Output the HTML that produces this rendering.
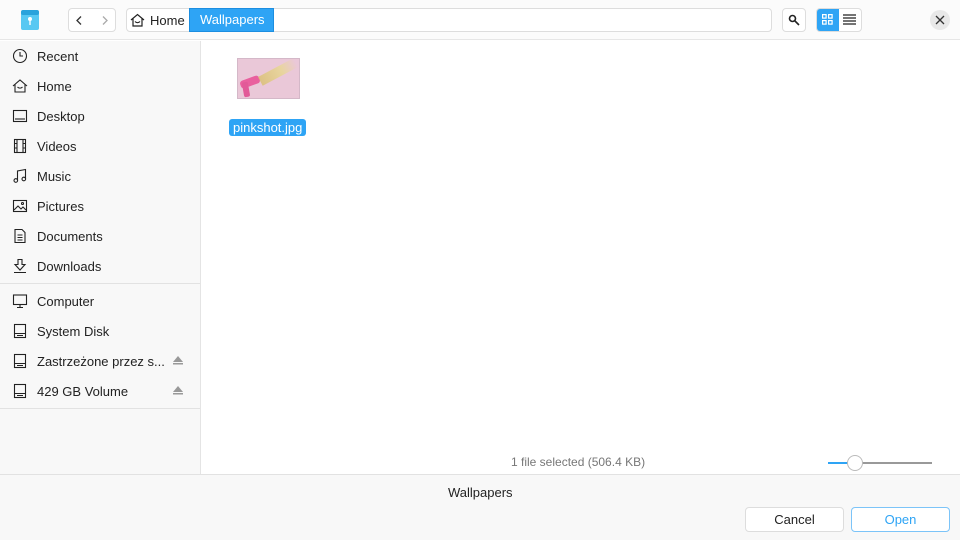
<!DOCTYPE html><html><head><style>
*{margin:0;padding:0;box-sizing:border-box}
body{width:960px;height:540px;overflow:hidden;font-family:"Liberation Sans",sans-serif;font-size:13px;color:#222;background:#fff;position:relative}
.abs{position:absolute}
.top{left:0;top:0;width:960px;height:40px;background:#fbfbfb;border-bottom:1px solid #e6e6e6}
.side{left:0;top:41px;width:201px;height:433px;background:#f8f8f8;border-right:1px solid #e4e4e4}
.it{position:absolute;left:12px;height:20px;display:flex;align-items:center}
.it svg{width:16px;height:16px;margin-right:9px}
.sep{position:absolute;left:0;width:200px;height:1px;background:#e2e2e2}
.foot{left:0;top:474px;width:960px;height:66px;background:#f8f8f8;border-top:1px solid #e2e2e2}
.btn{position:absolute;top:507px;height:25px;width:99px;border:1px solid #ddd;border-radius:4px;background:#fff;text-align:center;line-height:23px}
</style></head><body>
<div class="abs top"></div>
<svg class="abs" style="left:20px;top:9px" width="20" height="22" viewBox="0 0 20 22"><rect x="1" y="3" width="18" height="18" rx="2" fill="#58c8f2"/><rect x="1" y="1" width="18" height="5" rx="2" fill="#2aa3dc"/><circle cx="10" cy="10" r="2" fill="#fff"/><rect x="9.3" y="10" width="1.4" height="6" fill="#fff"/></svg>
<div class="abs" style="left:68px;top:8px;width:48px;height:24px;border:1px solid #ddd;border-radius:4px;background:#fff"></div>
<svg class="abs" style="left:76px;top:16px" width="6" height="9" fill="none" stroke="#333" stroke-width="1.3"><path d="M5 0.5L1 4.5 5 8.5"/></svg>
<svg class="abs" style="left:102px;top:16px" width="6" height="9" fill="none" stroke="#aaa" stroke-width="1.3"><path d="M1 0.5L5 4.5 1 8.5"/></svg>
<div class="abs" style="left:126px;top:8px;width:646px;height:24px;border:1px solid #ddd;border-radius:4px;background:#fff"></div>
<svg class="abs" style="left:130px;top:13px" width="15" height="14" viewBox="0 0 15 14" fill="none" stroke="#222" stroke-width="1.2"><path d="M1 7L7.5 1.5 14 7M3 5.5V13h9V5.5"/><path d="M5 8.5c1.5 1.5 3.5 1.5 5 0"/></svg>
<div class="abs" style="left:150px;top:13px">Home</div>
<div class="abs" style="left:189px;top:8px;width:85px;height:24px;background:#2ea4f5;border:1px solid #1c8ee0;color:#fff;padding-left:10px;line-height:22px">Wallpapers</div>
<div class="abs" style="left:782px;top:8px;width:24px;height:24px;border:1px solid #ddd;border-radius:4px;background:#fff"></div>
<svg class="abs" style="left:788px;top:14px" width="12" height="12" fill="none" stroke="#222" stroke-width="1.6"><circle cx="4.5" cy="4.5" r="3"/><path d="M7 7l4 4"/></svg>
<div class="abs" style="left:816px;top:8px;width:46px;height:24px;border:1px solid #ddd;border-radius:4px;background:#fff;overflow:hidden"><div style="width:22px;height:24px;background:#2ea4f5"></div></div>
<svg class="abs" style="left:822px;top:14px" width="11" height="11" fill="none" stroke="#fff" stroke-width="1.2"><rect x=".6" y=".6" width="3.5" height="3.5"/><rect x="6.6" y=".6" width="3.5" height="3.5"/><rect x=".6" y="6.6" width="3.5" height="3.5"/><rect x="6.6" y="6.6" width="3.5" height="3.5"/></svg>
<svg class="abs" style="left:843px;top:14px" width="13" height="11" stroke="#222" stroke-width="1.2"><path d="M0 1h13M0 4h13M0 7h13M0 10h13"/></svg>
<div class="abs" style="left:930px;top:10px;width:20px;height:20px;border-radius:50%;background:#e8e8e8"></div>
<svg class="abs" style="left:935px;top:15px" width="10" height="10" stroke="#333" stroke-width="1.3"><path d="M1 1l8 8M9 1L1 9"/></svg>

<div class="abs side">
<div class="it" style="top:5px"><svg viewBox="0 0 16 16" fill="none" stroke="#222" stroke-width="1.1"><circle cx="8" cy="8" r="6.5"/><path d="M8 4v4h3"/></svg>Recent</div>
<div class="it" style="top:35px"><svg viewBox="0 0 16 16" fill="none" stroke="#222" stroke-width="1.1"><path d="M1 8L8 2l7 6M3 6.5V14h10V6.5"/><path d="M5.5 9c1.5 1.5 3.5 1.5 5 0"/></svg>Home</div>
<div class="it" style="top:65px"><svg viewBox="0 0 16 16" fill="none" stroke="#222" stroke-width="1.1"><rect x="1.5" y="2.5" width="13" height="11"/><path d="M3 11h10"/></svg>Desktop</div>
<div class="it" style="top:95px"><svg viewBox="0 0 16 16" fill="none" stroke="#222" stroke-width="1.1"><rect x="2.5" y="1.5" width="11" height="13"/><path d="M5 1.5v13M11 1.5v13M2.5 5.5h2.5M2.5 10h2.5M11 5.5h2.5M11 10h2.5"/></svg>Videos</div>
<div class="it" style="top:125px"><svg viewBox="0 0 16 16" fill="none" stroke="#222" stroke-width="1.1"><path d="M5.5 12.5V3l8-1.5v9.5"/><circle cx="3.8" cy="12.5" r="1.8"/><circle cx="11.8" cy="11" r="1.8"/></svg>Music</div>
<div class="it" style="top:155px"><svg viewBox="0 0 16 16" fill="none" stroke="#222" stroke-width="1.1"><rect x="1.5" y="2.5" width="13" height="11"/><path d="M2 12l4-4 3 3 2-2 3 3"/><circle cx="10.5" cy="5.5" r="1"/></svg>Pictures</div>
<div class="it" style="top:185px"><svg viewBox="0 0 16 16" fill="none" stroke="#222" stroke-width="1.1"><path d="M3 1.5h7l3 3v10H3z"/><path d="M5.5 7h5M5.5 9.5h5M5.5 12h5"/></svg>Documents</div>
<div class="it" style="top:215px"><svg viewBox="0 0 16 16" fill="none" stroke="#222" stroke-width="1.1"><path d="M6 1.5h4v5h3L8 12 3 6.5h3zM2 14.5h12"/></svg>Downloads</div>
<div class="sep" style="top:242px"></div>
<div class="it" style="top:250px"><svg viewBox="0 0 16 16" fill="none" stroke="#222" stroke-width="1.1"><rect x="1.5" y="2" width="13" height="9.5"/><path d="M5 14.5h6M8 11.5v3"/></svg>Computer</div>
<div class="it" style="top:280px"><svg viewBox="0 0 16 16" fill="none" stroke="#222" stroke-width="1.1"><rect x="2.5" y="1.5" width="11" height="13"/><path d="M2.5 10.5h11M5 12.5h6"/></svg>System Disk</div>
<div class="it" style="top:310px"><svg viewBox="0 0 16 16" fill="none" stroke="#222" stroke-width="1.1"><rect x="2.5" y="1.5" width="11" height="13"/><path d="M2.5 10.5h11M5 12.5h6"/></svg>Zastrzeżone przez s...</div>
<div class="it" style="top:340px"><svg viewBox="0 0 16 16" fill="none" stroke="#222" stroke-width="1.1"><rect x="2.5" y="1.5" width="11" height="13"/><path d="M2.5 10.5h11M5 12.5h6"/></svg>429 GB Volume</div>
<svg class="abs" style="left:173px;top:315px" width="10" height="9" fill="#999"><path d="M5 0l5 6H0z"/><rect y="7" width="10" height="1.5"/></svg>
<svg class="abs" style="left:173px;top:345px" width="10" height="9" fill="#999"><path d="M5 0l5 6H0z"/><rect y="7" width="10" height="1.5"/></svg>
<div class="sep" style="top:367px"></div>
</div>

<div class="abs" style="left:237px;top:58px;width:63px;height:41px;background:#eac8d8;border:1px solid #d4b8c8;overflow:hidden">
<div style="position:absolute;left:2px;top:19px;width:20px;height:8px;background:#e9609e;border-radius:3px;transform:rotate(-20deg)"></div>
<div style="position:absolute;left:5px;top:23px;width:6px;height:15px;background:#e25a98;border-radius:2px;transform:rotate(-10deg)"></div>
<div style="position:absolute;left:20px;top:8px;width:40px;height:10px;background:linear-gradient(90deg,#d9c070,#e8d890 60%,transparent);transform:rotate(-28deg);opacity:.8"></div>
</div>
<div class="abs" style="left:229px;top:119px;background:#2ea4f5;color:#fff;padding:0 4px;border-radius:3px;height:17px;line-height:17px">pinkshot.jpg</div>

<div class="abs" style="left:511px;top:455px;color:#777;font-size:12px">1 file selected (506.4 KB)</div>
<div class="abs" style="left:828px;top:462px;width:104px;height:2px;background:#999"></div>
<div class="abs" style="left:828px;top:462px;width:22px;height:2px;background:#2ea4f5"></div>
<div class="abs" style="left:847px;top:455px;width:16px;height:16px;border-radius:50%;background:#fff;border:1px solid #bbb"></div>

<div class="abs foot"></div>
<div class="abs" style="left:448px;top:485px">Wallpapers</div>
<div class="btn" style="left:745px">Cancel</div>
<div class="btn" style="left:851px;border-color:#7cc4f8;color:#2ea4f5">Open</div>
</body></html>
